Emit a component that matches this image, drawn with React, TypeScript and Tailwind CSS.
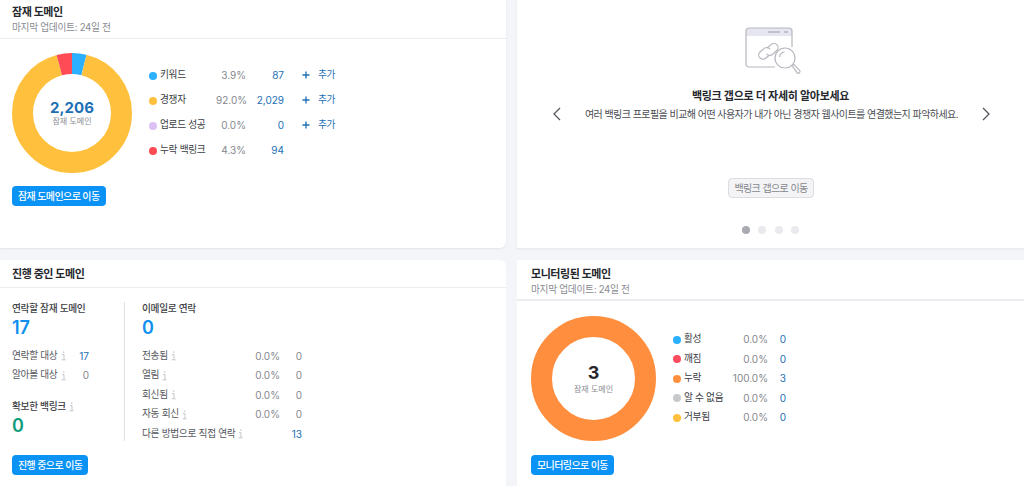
import React from "react";

const font = { fontFamily: '"Inter", "Noto Sans CJK KR", sans-serif' };
const ko = "text-[9.7px] tracking-[-0.3px]";

function Info() {
  return (
    <svg width="7" height="10" viewBox="0 0 7 10" className="ml-[2px] shrink-0" fill="none" stroke="#c3c5ca" strokeWidth="1">
      <path d="M3 1.2h1.4" strokeWidth="1.3" />
      <path d="M2 3.6h2v4.9M1.6 8.8h4" />
    </svg>
  );
}

function Btn({ children }: { children: React.ReactNode }) {
  return (
    <button className="block h-5 rounded-[4px] bg-[#0a92f5] px-[6px] text-[10px] leading-5 font-medium tracking-[-0.6px] text-white whitespace-nowrap">
      {children}
    </button>
  );
}

function Donut({ size, r, width, segs, children }: { size: number; r: number; width: number; segs: { c: string; p: number }[]; children: React.ReactNode }) {
  const circ = 2 * Math.PI * r;
  let off = 0;
  return (
    <div className="relative shrink-0" style={{ width: size, height: size }}>
      <svg width={size} height={size} viewBox={`0 0 ${size} ${size}`} className="-rotate-90">
        {segs.map((s, i) => {
          const el = (
            <circle
              key={i}
              cx={size / 2}
              cy={size / 2}
              r={r}
              fill="none"
              stroke={s.c}
              strokeWidth={width}
              strokeDasharray={`${(s.p / 100) * circ} ${circ}`}
              strokeDashoffset={-off}
            />
          );
          off += (s.p / 100) * circ;
          return el;
        })}
      </svg>
      <div className="absolute inset-0 flex flex-col items-center justify-center">{children}</div>
    </div>
  );
}

function Plus() {
  return (
    <svg width="8" height="8" viewBox="0 0 8 8" stroke="#1c6fb5" strokeWidth="1.3" className="shrink-0">
      <path d="M4 .5v7M.5 4h7" />
    </svg>
  );
}

const topRows = [
  { c: "#2bb0ff", l: "키워드", p: "3.9%", n: "87", add: true },
  { c: "#ffc13d", l: "경쟁자", p: "92.0%", n: "2,029", add: true },
  { c: "#dcc0f5", l: "업로드 성공", p: "0.0%", n: "0", add: true },
  { c: "#ff4b55", l: "누락 백링크", p: "4.3%", n: "94", add: false },
];

const monRows = [
  { c: "#2bb0ff", l: "활성", p: "0.0%", n: "0" },
  { c: "#ff4b5f", l: "깨짐", p: "0.0%", n: "0" },
  { c: "#ff8f3f", l: "누락", p: "100.0%", n: "3" },
  { c: "#c7c8ca", l: "알 수 없음", p: "0.0%", n: "0" },
  { c: "#ffc13d", l: "거부됨", p: "0.0%", n: "0" },
];

const mailRows = [
  { l: "전송됨", p: "0.0%", n: "0" },
  { l: "열림", p: "0.0%", n: "0" },
  { l: "회신됨", p: "0.0%", n: "0" },
  { l: "자동 회신", p: "0.0%", n: "0" },
  { l: "다른 방법으로 직접 연락", p: "", n: "13" },
];

function Header({ title, sub, className }: { title: string; sub?: string; className: string }) {
  return (
    <div className={`border-[#ebecf0] ${className}`}>
      <div className="text-[11px] leading-4 font-semibold tracking-[-0.45px] text-[#25272c]">{title}</div>
      {sub && <div className="mt-[1px] text-[9.7px] leading-[14px] tracking-[-0.3px] text-[#8a8c92]">{sub}</div>}
    </div>
  );
}

export default function App() {
  return (
    <div style={font} className="h-[486px] w-[1024px] overflow-hidden bg-[#f4f5f9]">
      <div className="grid grid-cols-[506px_507px] grid-rows-[248px_226px] gap-x-[11px] gap-y-3">
        {/* 잠재 도메인 */}
        <section className="flex flex-col rounded-br-md bg-white shadow-[0_1px_2px_rgba(30,40,70,0.08)]">
          <Header title="잠재 도메인" sub="마지막 업데이트: 24일 전" className="h-[39px] border-b px-3 pt-[4px]" />
          <div className="flex items-start pl-3 pt-[14px]">
            <Donut size={120} r={49.5} width={21} segs={[{ c: "#2bb0ff", p: 3.9 }, { c: "#ffc13d", p: 91.8 }, { c: "#ff4b55", p: 4.3 }]}>
              <div className="text-[15px] leading-[17px] font-bold text-[#1c6fb5]">2,206</div>
              <div className="text-[8px] leading-[11px] text-[#8a8c92]">잠재 도메인</div>
            </Donut>
            <div className="ml-[17px] mt-[10px] flex flex-col">
              {topRows.map((r) => (
                <div key={r.l} className="flex h-[25px] items-center text-[10px]">
                  <span className="h-2 w-2 rounded-full" style={{ background: r.c }} />
                  <span className={`ml-[3px] w-[56px] text-[#3a3c42] whitespace-nowrap ${ko}`}>{r.l}</span>
                  <span className="w-[30px] text-right text-[#85878d]">{r.p}</span>
                  <span className="w-[38px] text-right text-[#1c6fb5]">{r.n}</span>
                  {r.add && (
                    <span className={`ml-[18px] flex items-center gap-[8px] text-[#1c6fb5] ${ko}`}>
                      <Plus />
                      추가
                    </span>
                  )}
                </div>
              ))}
            </div>
          </div>
          <div className="mt-[13px] flex pl-3">
            <Btn>잠재 도메인으로 이동</Btn>
          </div>
        </section>

        {/* 백링크 갭 */}
        <section className="flex flex-col items-center bg-white shadow-[0_1px_2px_rgba(30,40,70,0.08)]">
          <svg width="58" height="48" viewBox="0 0 58 48" fill="none" stroke="#b6b7bf" strokeWidth="1.2" className="ml-[7px] mt-[27px] shrink-0">
            <path d="M1 4a3 3 0 0 1 3-3h40a3 3 0 0 1 3 3v5H1z" fill="#e6e6f0" stroke="none" />
            <path d="M30 40H4a3 3 0 0 1-3-3V4a3 3 0 0 1 3-3h40a3 3 0 0 1 3 3v16" />
            <path d="M23 5h12M39 5h4" stroke="#9a9ba3" />
            <path d="M24 28.5l-3 2.5a4.2 4.2 0 0 1-6-6l4-3.4a4.2 4.2 0 0 1 6 .4" />
            <path d="M22 21l4-3.4a4.2 4.2 0 0 1 6 .3 4.2 4.2 0 0 1-.4 5.9l-4 3.4a4.2 4.2 0 0 1-6-.4" />
            <circle cx="40" cy="31" r="10" fill="#fff" />
            <path d="M34.5 30a6 6 0 0 1 5-5" />
            <path d="M47 38.5l1.6-1.4 6.3 6.6a2 2 0 0 1-2.5 2.5z" />
          </svg>
          <h3 className="mt-[13px] text-[11px] leading-4 font-semibold tracking-[-0.3px] text-[#25272c]">백링크 갭으로 더 자세히 알아보세요</h3>
          <div className="mt-[1px] flex h-[18px] w-full items-center justify-between pl-[35px] pr-[33px]">
            <svg width="10" height="14" viewBox="0 0 10 14" fill="none" stroke="#55575d" strokeWidth="1.3"><path d="M8 1L2 7l6 6" /></svg>
            <p className="text-[10px] leading-4 tracking-[-0.55px] text-[#4a4c52] whitespace-nowrap">여러 백링크 프로필을 비교해 어떤 사용자가 내가 아닌 경쟁자 웹사이트를 연결했는지 파악하세요.</p>
            <svg width="10" height="14" viewBox="0 0 10 14" fill="none" stroke="#55575d" strokeWidth="1.3"><path d="M2 1l6 6-6 6" /></svg>
          </div>
          <button className="ml-[1px] mt-[55px] h-5 rounded-[4px] border border-[#dcdde2] bg-[#f4f4f6] px-[5px] text-[10px] leading-[18px] tracking-[-0.6px] text-[#85878d] whitespace-nowrap">백링크 갭으로 이동</button>
          <div className="mt-[28px] flex items-center gap-[8.6px]">
            <span className="h-2 w-2 rounded-full bg-[#a9aab2]" />
            <span className="h-2 w-2 rounded-full bg-[#e9e9ee]" />
            <span className="h-2 w-2 rounded-full bg-[#e9e9ee]" />
            <span className="h-2 w-2 rounded-full bg-[#e9e9ee]" />
          </div>
        </section>

        {/* 진행 중인 도메인 */}
        <section className="flex flex-col rounded-tr-md bg-white">
          <Header title="진행 중인 도메인" className="h-[28px] border-b px-3 pt-[6px]" />
          <div className="flex h-[153px] items-start pl-3 pt-[14px]">
            <div className="h-[139px] w-[113px] border-r border-[#dfe0e4] text-[10px]">
              <div className={`pt-[1px] leading-[12px] font-medium text-[#3a3c42] ${ko}`}>연락할 잠재 도메인</div>
              <div className="mt-[2px] text-[18px] leading-[22px] font-semibold text-[#0f8fee]">17</div>
              <div className={`mt-[7.5px] flex h-[19.5px] w-[77px] items-center text-[#55575d] ${ko}`}>
                연락할 대상<Info /><span className="ml-auto text-[10px] tracking-normal text-[#1c6fb5]">17</span>
              </div>
              <div className={`flex h-[19.5px] w-[77px] items-center text-[#55575d] ${ko}`}>
                알아볼 대상<Info /><span className="ml-auto text-[10px] tracking-normal text-[#85878d]">0</span>
              </div>
              <div className={`mt-[13.5px] flex h-4 items-center font-medium text-[#3a3c42] ${ko}`}>확보한 백링크<Info /></div>
              <div className="text-[18px] leading-[22px] font-semibold text-[#109c7c]">0</div>
            </div>
            <div className="ml-[17px] w-[160px] text-[10px]">
              <div className={`pt-[1px] leading-[12px] font-medium text-[#3a3c42] ${ko}`}>이메일로 연락</div>
              <div className="mt-[2px] text-[18px] leading-[22px] font-semibold text-[#0f8fee]">0</div>
              <div className="mt-[7.5px] flex flex-col">
                {mailRows.map((r) => (
                  <div key={r.l} className="flex h-[19.5px] items-center text-[#55575d]">
                    <span className={`whitespace-nowrap ${ko}`}>{r.l}</span><Info />
                    {r.p && <span className="ml-auto w-[40px] text-right text-[#85878d]">{r.p}</span>}
                    <span className={r.p ? "w-[22px] text-right text-[#85878d]" : "ml-auto text-[#1c6fb5]"}>{r.n}</span>
                  </div>
                ))}
              </div>
            </div>
          </div>
          <div className="mt-[14px] flex pl-3">
            <Btn>진행 중으로 이동</Btn>
          </div>
        </section>

        {/* 모니터링된 도메인 */}
        <section className="flex flex-col bg-white">
          <Header title="모니터링된 도메인" sub="마지막 업데이트: 24일 전" className="h-[41px] border-b-2 px-[14px] pt-[6px]" />
          <div className="flex items-center pl-[14px] pt-[15px]">
            <Donut size={125} r={52} width={21} segs={[{ c: "#ff8f3f", p: 100 }]}>
              <div className="text-[18px] leading-[20px] font-bold text-[#25272c]">3</div>
              <div className="text-[8px] leading-[12px] text-[#8a8c92]">잠재 도메인</div>
            </Donut>
            <div className="ml-[17px] flex flex-col">
              {monRows.map((r) => (
                <div key={r.l} className="flex h-[19.5px] items-center text-[10px]">
                  <span className="h-2 w-2 rounded-full" style={{ background: r.c }} />
                  <span className={`ml-[3px] w-[44px] text-[#3a3c42] whitespace-nowrap ${ko}`}>{r.l}</span>
                  <span className="w-[40px] text-right text-[#85878d]">{r.p}</span>
                  <span className="w-[18px] text-right text-[#1c6fb5]">{r.n}</span>
                </div>
              ))}
            </div>
          </div>
          <div className="mt-[14px] flex pl-[14px]">
            <Btn>모니터링으로 이동</Btn>
          </div>
        </section>
      </div>
    </div>
  );
}
